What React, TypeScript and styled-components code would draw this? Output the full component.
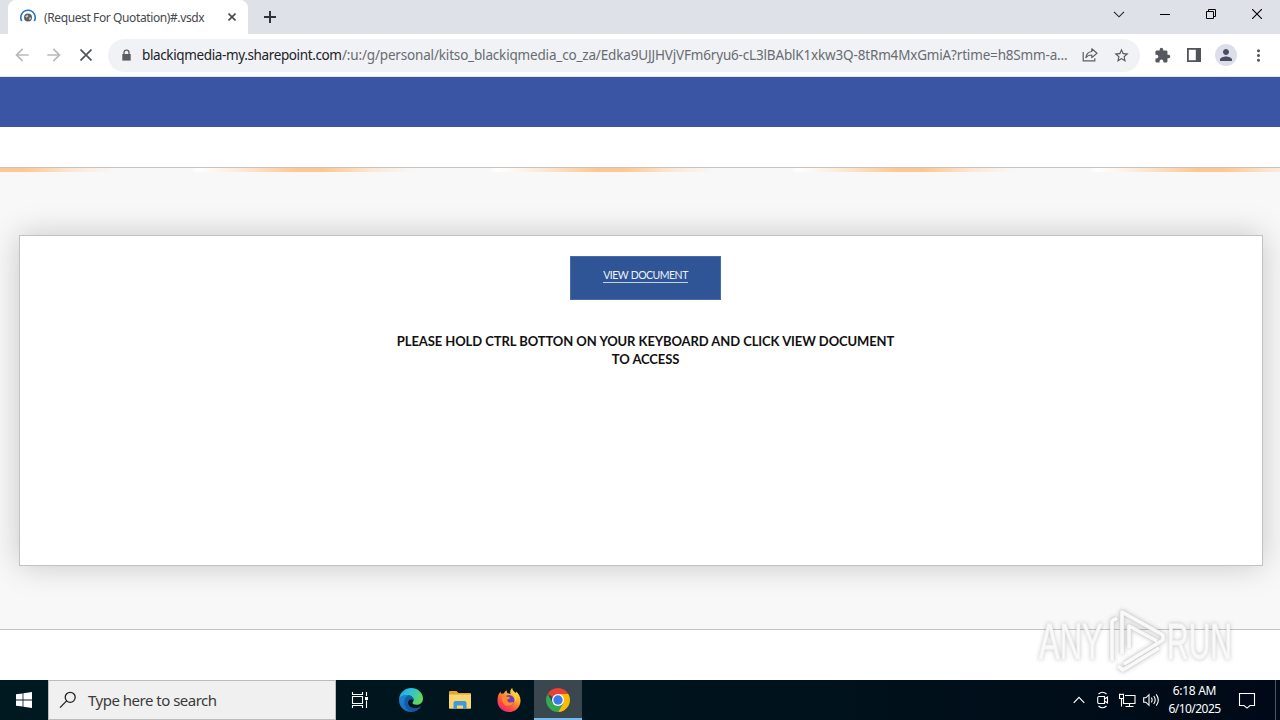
import type { FC } from "react";
import styled, { createGlobalStyle } from "styled-components";
import {
  MdArrowBack,
  MdArrowForward,
  MdExtension,
  MdMoreVert,
  MdPerson,
  MdStarBorder,
} from "react-icons/md";

const UI_FONT = `"Noto Sans", "Open Sans", sans-serif`;

const App: FC = () => {
  return (
    <Root>
      <GlobalStyle />
      <TabStrip>
        <Tab>
          <Favicon />
          <TabTitle>(Request For Quotation)#.vsdx</TabTitle>
          <svg width="8" height="8" viewBox="0 0 8 8" stroke="#45494d" strokeWidth="1.6">
            <path d="M.5.5l7 7M7.5.5l-7 7" />
          </svg>
        </Tab>
        <NewTab>
          <svg width="12" height="12" viewBox="0 0 12 12" stroke="#303338" strokeWidth="2">
            <path d="M6 0v12M0 6h12" />
          </svg>
        </NewTab>
        <WindowControls />
      </TabStrip>

      <Toolbar>
        <NavButton>
          <MdArrowBack size={20} color="#bababa" />
        </NavButton>
        <NavButton>
          <MdArrowForward size={20} color="#bababa" />
        </NavButton>
        <NavButton>
          <svg width="12" height="12" viewBox="0 0 12 12" stroke="#505458" strokeWidth="1.7">
            <path d="M.5.5l11 11M11.5.5l-11 11" />
          </svg>
        </NavButton>
        <AddressBar>
          <LockIcon />
          <Url>
            <Host>blackiqmedia-my.sharepoint.com</Host>
            <Path>/:u:/g/personal/kitso_blackiqmedia_co_za/Edka9UJJHVjVFm6ryu6-cL3lBAblK1xkw3Q-8tRm4MxGmiA?rtime=h8Smm-a...</Path>
          </Url>
          <BarActions>
            <ShareIcon />
            <MdStarBorder size={17} color="#55595e" />
          </BarActions>
        </AddressBar>
        <Extras>
          <MdExtension size={17} color="#55595e" />
          <SidePanelIcon />
          <Avatar>
            <MdPerson size={18} color="#484d63" />
          </Avatar>
          <MdMoreVert size={19} color="#55595e" />
        </Extras>
      </Toolbar>

      <Banner />
      <Ribbon />
      <Canvas>
        <Glow />
        <Card>
          <ViewButton>
            <ViewLabel>VIEW DOCUMENT</ViewLabel>
          </ViewButton>
          <Notice>
            <NoticeLine>PLEASE HOLD CTRL BOTTON ON YOUR KEYBOARD AND CLICK VIEW DOCUMENT</NoticeLine>
            <NoticeLine>TO ACCESS</NoticeLine>
          </Notice>
        </Card>
      </Canvas>
      <Footer />

      <Taskbar>
        <StartButton>
          <svg width="16" height="16" viewBox="0 0 16 16" fill="#fff">
            <path d="M0 2.3L6.6 1.4V7.6H0zM7.4 1.2L16 0V7.6H7.4zM0 8.4H6.6V14.6L0 13.7zM7.4 8.4H16V16L7.4 14.8z" />
          </svg>
        </StartButton>
        <SearchBox>
          <svg width="18" height="18" viewBox="0 0 18 18" fill="none" stroke="#222" strokeWidth="1.3">
            <circle cx="11.2" cy="6.3" r="5" />
            <path d="M7.6 9.9L1 16.6" />
          </svg>
          <SearchText>Type here to search</SearchText>
        </SearchBox>
        <TaskButton>
          <TaskViewIcon />
        </TaskButton>
        <AppButton>
          <EdgeIcon />
        </AppButton>
        <AppButton>
          <ExplorerIcon />
        </AppButton>
        <AppButton>
          <FirefoxIcon />
        </AppButton>
        <AppButton $active>
          <ChromeIcon />
        </AppButton>
        <Tray>
          <svg width="12" height="8" viewBox="0 0 12 8" fill="none" stroke="#fff" strokeWidth="1.2">
            <path d="M.7 6.8L6 1.4l5.3 5.4" />
          </svg>
          <MeetIcon />
          <NetworkIcon />
          <VolumeIcon />
        </Tray>
        <Clock>
          <ClockLine $spacing={-0.3}>6:18 AM</ClockLine>
          <ClockLine $spacing={-0.55}>6/10/2025</ClockLine>
        </Clock>
        <svg width="18" height="17" viewBox="0 0 18 17" fill="none" stroke="#fff" strokeWidth="1.1">
          <path d="M1.5 1.5h15v12H12l-3 2.6-3-2.6H1.5z" />
        </svg>
        <DesktopEdge />
      </Taskbar>
      <Watermark />
    </Root>
  );
};

export default App;

const Favicon: FC = () => (
  <svg width="16" height="16" viewBox="0 0 16 16" fill="none">
    <path d="M1.7 12A7.2 7.2 0 1 1 14.3 12" stroke="#2a72c8" strokeWidth="1.6" />
    <circle cx="8" cy="8.6" r="4" fill="#5b6066" />
    <path d="M5 7.5l2.5-1.7 1 1.4-1.7 1.6zM8.8 9l2-.8.3 1.5-1.7 1.4z" fill="#c3c6c9" />
  </svg>
);

const LockIcon: FC = () => (
  <svg width="13" height="13" viewBox="0 0 13 13">
    <path d="M4 5.500V3.600a2.500 2.500 0 0 1 5 0V5.500" fill="none" stroke="#5a5e63" strokeWidth="1.300" />
    <path d="M2.300 5h8.400v6.600H2.300z" fill="#5a5e63" />
  </svg>
);

const WindowControls: FC = () => (
  <Controls>
    <svg width="12" height="7" viewBox="0 0 12 7" fill="none" stroke="#222" strokeWidth="1.1">
      <path d="M1 .8l5 5 5-5" />
    </svg>
    <svg width="10" height="10" viewBox="0 0 10 10" stroke="#000">
      <path d="M0 5.5h10" />
    </svg>
    <svg width="10" height="10" viewBox="0 0 10 10" fill="none" stroke="#000">
      <path d="M.5 2.5h7v7h-7zM2.500 2.500v-2h7v7h-2" />
    </svg>
    <svg width="10" height="10" viewBox="0 0 10 10" stroke="#000" strokeWidth="1.1">
      <path d="M0 0l10 10M10 0L0 10" />
    </svg>
  </Controls>
);

const ShareIcon: FC = () => (
  <svg width="16" height="16" viewBox="0 0 16 16" fill="none" stroke="#5b5f64" strokeWidth="1.2">
    <path d="M1.2 5v8.8h11.6v-2.6" />
    <path d="M9.8 1.8L15 6.2l-5.2 4.4V8c-2.700 0-4.600.8-5.900 2.700C4.300 7 6.200 4.900 9.800 4.500z" strokeLinejoin="round" />
  </svg>
);

const SidePanelIcon: FC = () => (
  <svg width="14" height="14" viewBox="0 0 14 14">
    <path d="M0 0h14v14H0zM1.800 1.800v10.400H8.800V1.800z" fill="#505458" fillRule="evenodd" />
  </svg>
);

const TaskViewIcon: FC = () => (
  <svg width="18" height="16" viewBox="0 0 18 16" fill="none" stroke="#fff" strokeWidth="1.100">
    <path d="M1.500 0v2.500h10V0M1.500 16v-2.500h10V16M1.500 4.500h10v7h-10zM15.500 0v4M15.500 8.500V16" />
    <path d="M14 5h3v3h-3z" fill="#fff" stroke="none" />
  </svg>
);

const EdgeIcon: FC = () => (
  <svg width="24" height="24" viewBox="0 0 24 24">
    <defs>
      <linearGradient id="edgeTop" x1="0" y1="0" x2="1" y2="0.500">
        <stop offset="0" stopColor="#1f9fe6" />
        <stop offset="0.500" stopColor="#2fc4d4" />
        <stop offset="1" stopColor="#62d65a" />
      </linearGradient>
      <linearGradient id="edgeLow" x1="0" y1="0" x2="1" y2="1">
        <stop offset="0" stopColor="#1a86d8" />
        <stop offset="1" stopColor="#1462ad" />
      </linearGradient>
    </defs>
    <path d="M0 11C1 4 6 0 12 0c7 0 12 5 12 10.500 0 4-3 6.300-6.300 6.300-2.700 0-4.500-1-4.200-2 .2-.6 1.100-1.300 1.100-2.800 0-2.600-2.600-4.700-6.100-4.700C4.500 7.300 1.200 9 0 11z" fill="url(#edgeTop)" />
    <path d="M0 12C.2 8.600 4 6.700 8 7.100c4 .3 6.600 2.400 6.600 4.900-3.200-1.800-5.600.1-5.600 2.800 0 3.200 3.400 5.500 7 5.500 2.400 0 4.500-.9 6.100-2C20 22 16.300 24 12 24 5.400 24 0 18.600 0 12z" fill="url(#edgeLow)" />
    <path d="M8.500 8C5.900 10 5 12.500 5.600 15.900c.8 4.500 4.500 7.300 8.700 7.900 3.500-.6 6.300-2.700 7.800-5.500-1.600 1.100-3.700 2-6.100 2-3.600 0-7-2.300-7-5.500 0-2.700 2.400-4.600 5.600-2.800C14.600 9.600 12 7.500 8.500 8z" fill="#124a8e" opacity=".65" />
  </svg>
);

const ExplorerIcon: FC = () => (
  <svg width="22" height="18" viewBox="0 0 22 18">
    <path d="M0 1Q0 0 1 0h6.500l2 2H21q1 0 1 1v3H0z" fill="#e6a52c" />
    <path d="M0 3.500h22V17q0 .8-.8.8H.8Q0 17.800 0 17z" fill="#fbd570" />
    <path d="M4.500 18v-6q0-2 2-2h9q2 0 2 2v6H14v-3.500H8V18z" fill="#3d9bdc" />
  </svg>
);

const FirefoxIcon: FC = () => (
  <svg width="24" height="24" viewBox="0 0 24 24">
    <defs>
      <linearGradient id="fox" x1="0.850" y1="0.050" x2="0.200" y2="1">
        <stop offset="0" stopColor="#fff04a" />
        <stop offset="0.350" stopColor="#ffa52a" />
        <stop offset="0.700" stopColor="#ff4a45" />
        <stop offset="1" stopColor="#e52283" />
      </linearGradient>
    </defs>
    <path d="M1 8c.6-2 1.500-3.500 2.600-4.600 0 1 .1 1.800.5 2.400 1-.4 1.900-.5 2.700-.3.8-1.700 1.700-2.700 2.900-3.300-.2 1.200 0 2 .6 2.700L13.500 6C12.700 3.500 13.700 1.300 15.200 0c.2 2.500 2 3.600 3.700 5.100.3-.4.400-.9.400-1.500 2.700 2.400 4.400 5.900 4.200 9.800C23 19.600 18 24 12 24S.5 19.300.5 13.200C.5 11.200.6 9.500 1 8z" fill="url(#fox)" />
    <circle cx="12" cy="12.300" r="5.400" fill="#6b3fc4" />
    <path d="M5 8.600c2-1.500 3.600-1.100 5 .2 1.200.2 2.700 0 3 .8.100 1-1.700 1.600-2.700 2.200-.4 1.400.8 2.600 2.700 2.600 1.500 0 2.500-.7 3.500-.4-.5 2.300-2.500 3.800-5 3.800-4 0-7-3-6.500-9.200z" fill="#ff8b24" />
    <path d="M14.500 4.300c.7 2 3 3 3.500 6.100.3 1.700 0 3-.5 4.200 2.200-1.800 3-5.200 1.300-8.400z" fill="#ffcf35" />
  </svg>
);

const ChromeIcon: FC = () => (
  <svg width="24" height="24" viewBox="0 0 24 24">
    <path d="M12 12L1.610 6A12 12 0 0 1 22.390 6H12z" fill="#e94235" />
    <path d="M12 6h10.390A12 12 0 0 1 12 24l5.200-9z" fill="#fbbc04" />
    <path d="M1.610 6A12 12 0 0 0 12 24l5.200-9H12L6.800 15z" fill="#34a853" />
    <circle cx="12" cy="12" r="6" fill="#fff" />
    <circle cx="12" cy="12" r="4.700" fill="#3a7bea" />
  </svg>
);

const MeetIcon: FC = () => (
  <svg width="14" height="18" viewBox="0 0 14 18" fill="none" stroke="#fff" strokeWidth="1.100">
    <path d="M2.500 3Q6.500-.5 10.500 3M2.500 15q4 3.500 8 0M3 5.500h5.500v7H3q-1.300 0-1.300-1.300V6.800Q1.700 5.500 3 5.500zM8.500 8l3-2v6l-3-2" />
  </svg>
);

const NetworkIcon: FC = () => (
  <svg width="17" height="15" viewBox="0 0 17 15" fill="none" stroke="#fff" strokeWidth="1.100">
    <path d="M6 2.500h10v8H4.500V6M10.500 10.500v3M6.500 13.500h8M.500 1.500h4v4h-4zM2.500 5.500v8M1 .5v1M4 .5v1" />
  </svg>
);

const VolumeIcon: FC = () => (
  <svg width="17" height="14" viewBox="0 0 17 14" fill="none" stroke="#fff" strokeWidth="1.100">
    <path d="M.700 4.800h2.100L6 1.700v10.600L2.800 9.200H.700zM8.300 4.700q1.700 2.300 0 4.600M10.700 3q3 4 0 8M13.200 1.300q4.200 5.700 0 11.400" />
  </svg>
);

const PLAY_MARK = "M76 57V17l5-3M86 50V8l41 23v5L88 60M82 62l5 4 36-22M93 44V22l28 15";

const Watermark: FC = () => (
  <WatermarkLayer>
    <svg width="240" height="72" viewBox="0 0 240 72" fontFamily="Liberation Sans" fontSize="50">
      <g fill="#fff" fillOpacity=".85" stroke="#f4f4f4" strokeOpacity=".8" strokeWidth="1.400">
        <text transform="translate(3 55) scale(0.620 1)">ANY</text>
        <text transform="translate(131 55) scale(0.600 1)">RUN</text>
      </g>
      <g fill="none" strokeLinejoin="round">
        <path d={PLAY_MARK} stroke="#d4d4d4" strokeOpacity=".5" strokeWidth="5" />
        <path d={PLAY_MARK} stroke="#fff" strokeOpacity=".85" strokeWidth="3.600" />
      </g>
    </svg>
  </WatermarkLayer>
);

const GlobalStyle = createGlobalStyle`
  * {
    box-sizing: border-box;
  }
  body {
    margin: 0;
    overflow: hidden;
  }
  svg {
    display: block;
    flex-shrink: 0;
  }
`;

const Root = styled.div`
  position: relative;
  display: flex;
  flex-direction: column;
  width: 1280px;
  height: 720px;
  background: #fff;
  font-family: ${UI_FONT};
`;

const TabStrip = styled.header`
  display: flex;
  height: 34px;
  flex-shrink: 0;
  padding-left: 8px;
  background: #dee1e8;
`;

const Tab = styled.div`
  display: flex;
  align-items: center;
  width: 240px;
  padding: 0 12px;
  border-radius: 8px 8px 0 0;
  background: #fff;
`;

const TabTitle = styled.span`
  flex: 1;
  padding-left: 8px;
  color: #45484c;
  font-size: 12px;
  letter-spacing: -0.39px;
  white-space: nowrap;
`;

const NewTab = styled.div`
  display: flex;
  align-items: center;
  padding-left: 16px;
`;

const Controls = styled.div`
  display: grid;
  grid-template-columns: repeat(4, 46px);
  align-items: center;
  justify-items: center;
  height: 28px;
  margin-left: auto;
`;

const Toolbar = styled.div`
  display: flex;
  align-items: center;
  height: 43px;
  flex-shrink: 0;
  padding-left: 6px;
  border-bottom: 1px solid #e2e4ea;
  background: #fff;
`;

const NavButton = styled.div`
  display: grid;
  place-items: center;
  width: 32px;
  height: 32px;
`;

const AddressBar = styled.div`
  display: flex;
  align-items: center;
  width: 1032px;
  height: 33px;
  margin-left: 6px;
  padding: 0 10px 0 12px;
  border-radius: 17px;
  background: #f0f2f5;
`;

const Url = styled.div`
  display: flex;
  flex: 1;
  padding-left: 9px;
  font-size: 13.5px;
  white-space: nowrap;
`;

const Host = styled.span`
  width: 200px;
  color: #202226;
  letter-spacing: -0.37px;
`;

const Path = styled.span`
  color: #686c71;
  letter-spacing: -0.17px;
`;

const BarActions = styled.div`
  display: flex;
  align-items: center;
  gap: 15px;
`;

const Extras = styled.div`
  display: grid;
  grid-template-columns: repeat(4, 32px);
  align-items: center;
  justify-items: center;
  margin-left: 6px;
`;

const Avatar = styled.div`
  display: grid;
  place-items: center;
  width: 22px;
  height: 22px;
  border-radius: 50%;
  background: #dcdfea;
`;

const Banner = styled.div`
  height: 50px;
  flex-shrink: 0;
  background: #3955a3;
`;

const Ribbon = styled.div`
  height: 40px;
  flex-shrink: 0;
  background: #fff;
`;

const Canvas = styled.main`
  display: flex;
  flex-direction: column;
  height: 463px;
  flex-shrink: 0;
  border: solid #c4c4c4;
  border-width: 1px 0;
  background: #f8f8f8;
`;

const Glow = styled.div`
  height: 4px;
  background: linear-gradient(90deg, #f8f8f8, #fff 8px, #fde9d9 50px, #ffc68d 108px, #ffc68d 133px, #fde9d9 185px, #f8f8f8 225px) 190px 0 / 300px 4px;
`;

const Card = styled.section`
  display: flex;
  flex-direction: column;
  align-items: center;
  height: 331px;
  margin: 63px 17px 0 19px;
  padding: 20px 0 0 9px;
  border: 1px solid #c2c2c2;
  background: #fff;
  box-shadow: 0 0 30px rgba(0, 0, 0, 0.2);
`;

const ViewButton = styled.div`
  display: flex;
  justify-content: center;
  width: 151px;
  height: 44px;
  padding-top: 11px;
  border: 1px solid #4a6ca6;
  background: #2f5597;
`;

const ViewLabel = styled.a`
  height: 15px;
  border-bottom: 1px solid #c5d0e3;
  color: #eef2f8;
  font: 10.5px/14px Lato, sans-serif;
  letter-spacing: -0.5px;
  word-spacing: 0.5px;
  white-space: nowrap;
`;

const Notice = styled.div`
  padding-top: 32px;
  color: #111;
  font: bold 13px/18px Lato, sans-serif;
  letter-spacing: -0.12px;
  word-spacing: 0.25px;
  text-align: center;
`;

const NoticeLine = styled.p`
  margin: 0;
  white-space: nowrap;
`;

const Footer = styled.div`
  height: 50px;
  flex-shrink: 0;
  background: #fff;
`;

const Taskbar = styled.footer`
  display: flex;
  align-items: center;
  height: 40px;
  flex-shrink: 0;
  background: linear-gradient(90deg, #001820, #00131d 60%, #000917);
`;

const StartButton = styled.div`
  display: grid;
  place-items: center;
  width: 48px;
  height: 40px;
`;

const SearchBox = styled.div`
  display: flex;
  align-items: center;
  width: 288px;
  height: 40px;
  padding-left: 10px;
  border: 1px solid #bcbcbc;
  background: #f0f0f0;
`;

const SearchText = styled.span`
  padding-left: 11px;
  color: #3a3a3a;
  font-size: 15px;
  letter-spacing: -0.5px;
  white-space: nowrap;
`;

const TaskButton = styled.div`
  display: grid;
  place-items: center;
  width: 48px;
  height: 40px;
  margin-right: 2px;
`;

const AppButton = styled.div<{ $active?: boolean }>`
  display: grid;
  place-items: center;
  width: ${({ $active }) => ($active ? 48 : 49)}px;
  height: 40px;
  margin-left: ${({ $active }) => ($active ? 1 : 0)}px;
  padding-top: ${({ $active }) => ($active ? 2 : 0)}px;
  border-bottom: ${({ $active }) => ($active ? "2px solid #76b9ed" : "none")};
  background: ${({ $active }) => ($active ? "#3a474e" : "transparent")};
`;

const Tray = styled.div`
  display: grid;
  grid-template-columns: repeat(4, 24px);
  align-items: center;
  justify-items: center;
  margin-left: auto;
`;

const Clock = styled.div`
  width: 63px;
  margin-right: 12px;
  color: #fff;
  font-size: 12px;
  line-height: 18px;
  text-align: center;
`;

const ClockLine = styled.div<{ $spacing: number }>`
  letter-spacing: ${({ $spacing }) => $spacing}px;
`;

const DesktopEdge = styled.div`
  width: 5px;
  height: 40px;
  margin-left: 19px;
  border-left: 1px solid #4b5460;
`;

/* floats over the page and the footer line */
const WatermarkLayer = styled.div`
  position: absolute;
  top: 604px;
  left: 1036px;
  filter: drop-shadow(0 0 2px rgba(0, 0, 0, 0.25));
`;
